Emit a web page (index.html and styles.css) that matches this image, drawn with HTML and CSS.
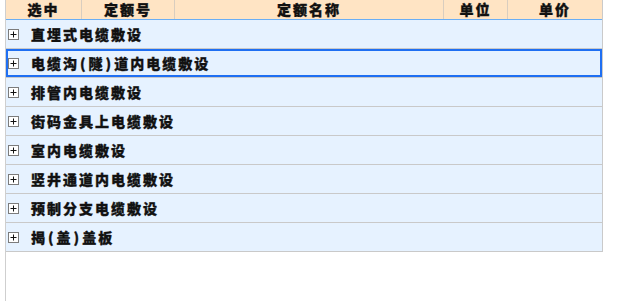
FILE: index.html
```html
<!DOCTYPE html>
<html lang="zh-CN">
<head>
<meta charset="utf-8">
<link rel="stylesheet" href="styles.css">
</head>
<body>
<div class="frame">
  <div class="table">
    <div class="head">
      <div class="th">选中</div>
      <div class="th">定额号</div>
      <div class="th">定额名称</div>
      <div class="th">单位</div>
      <div class="th">单价</div>
    </div>
    <div class="row"><svg class="plus" width="11" height="11" viewBox="0 0 11 11"><rect x="0.5" y="0.5" width="10" height="10" fill="#fff" stroke="#7c7c7c"/><path d="M2.5 5.5h6M5.5 2.5v6" stroke="#111" stroke-width="1"/></svg><span class="label">直埋式电缆敷设</span></div>
    <div class="row selected"><svg class="plus" width="11" height="11" viewBox="0 0 11 11"><rect x="0.5" y="0.5" width="10" height="10" fill="#fff" stroke="#7c7c7c"/><path d="M2.5 5.5h6M5.5 2.5v6" stroke="#111" stroke-width="1"/></svg><span class="label">电缆沟<span class="paren">(</span>隧<span class="paren">)</span>道内电缆敷设</span></div>
    <div class="row"><svg class="plus" width="11" height="11" viewBox="0 0 11 11"><rect x="0.5" y="0.5" width="10" height="10" fill="#fff" stroke="#7c7c7c"/><path d="M2.5 5.5h6M5.5 2.5v6" stroke="#111" stroke-width="1"/></svg><span class="label">排管内电缆敷设</span></div>
    <div class="row"><svg class="plus" width="11" height="11" viewBox="0 0 11 11"><rect x="0.5" y="0.5" width="10" height="10" fill="#fff" stroke="#7c7c7c"/><path d="M2.5 5.5h6M5.5 2.5v6" stroke="#111" stroke-width="1"/></svg><span class="label">街码金具上电缆敷设</span></div>
    <div class="row"><svg class="plus" width="11" height="11" viewBox="0 0 11 11"><rect x="0.5" y="0.5" width="10" height="10" fill="#fff" stroke="#7c7c7c"/><path d="M2.5 5.5h6M5.5 2.5v6" stroke="#111" stroke-width="1"/></svg><span class="label">室内电缆敷设</span></div>
    <div class="row"><svg class="plus" width="11" height="11" viewBox="0 0 11 11"><rect x="0.5" y="0.5" width="10" height="10" fill="#fff" stroke="#7c7c7c"/><path d="M2.5 5.5h6M5.5 2.5v6" stroke="#111" stroke-width="1"/></svg><span class="label">竖井通道内电缆敷设</span></div>
    <div class="row"><svg class="plus" width="11" height="11" viewBox="0 0 11 11"><rect x="0.5" y="0.5" width="10" height="10" fill="#fff" stroke="#7c7c7c"/><path d="M2.5 5.5h6M5.5 2.5v6" stroke="#111" stroke-width="1"/></svg><span class="label">预制分支电缆敷设</span></div>
    <div class="row"><svg class="plus" width="11" height="11" viewBox="0 0 11 11"><rect x="0.5" y="0.5" width="10" height="10" fill="#fff" stroke="#7c7c7c"/><path d="M2.5 5.5h6M5.5 2.5v6" stroke="#111" stroke-width="1"/></svg><span class="label">揭<span class="paren">(</span>盖<span class="paren">)</span>盖板</span></div>
  </div>
</div>
</body>
</html>
```

FILE: styles.css
```css
html, body {
  margin: 0;
  padding: 0;
  background: #fff;
}

body {
  font-family: "Noto Sans CJK SC", "Noto Sans", sans-serif;
  font-weight: 900;
  font-size: 14px;
  color: #111;
  -webkit-text-stroke: 0.35px #111;
}

.frame {
  margin-left: 5px;
  height: 301px;
  border-left: 1px solid #cfcfcf;
  box-sizing: border-box;
}

.table {
  width: 597px;
  border-right: 1px solid #cacaca;
  box-sizing: border-box;
}

.head {
  display: grid;
  grid-template-columns: 76px 93px 269px 64px 94px;
  height: 19px;
  background: #ffe4c4;
  border-bottom: 1px solid #6aaef5;
}

.th {
  border-right: 1px solid #d9cdbf;
  display: flex;
  align-items: center;
  justify-content: center;
  letter-spacing: 2px;
  line-height: 19px;
  color: #111;
}

.th:last-child {
  border-right: none;
}

.row {
  display: flex;
  align-items: center;
  height: 28px;
  background: #e6f2ff;
  border-bottom: 1px solid #c9c9c9;
  padding-left: 2px;
}

.row.selected {
  box-shadow: inset 0 0 0 2px #1f6ff2;
}

.plus {
  display: block;
  flex: 0 0 11px;
  width: 11px;
  height: 11px;
}

.label {
  margin-left: 12px;
  letter-spacing: 2px;
  line-height: 28px;
  white-space: nowrap;
}

.paren {
  padding: 0 1px;
}
```
